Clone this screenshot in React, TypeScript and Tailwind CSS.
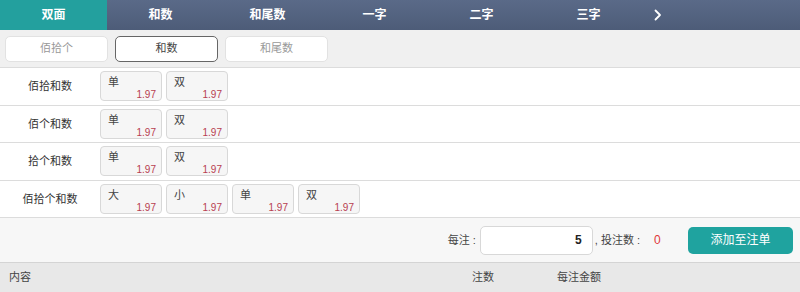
import React, { useState } from 'react'

const tabs = ['双面', '和数', '和尾数', '一字', '二字', '三字']
const subTabs = ['佰拾个', '和数', '和尾数']

const rows = [
  { label: '佰拾和数', items: ['单', '双'] },
  { label: '佰个和数', items: ['单', '双'] },
  { label: '拾个和数', items: ['单', '双'] },
  { label: '佰拾个和数', items: ['大', '小', '单', '双'] },
]

const App = () => {
  const [active, setActive] = useState(0)
  const [sub, setSub] = useState(1)
  const [amount, setAmount] = useState('5')

  return (
    <div className="w-[800px] h-[292px] overflow-hidden bg-white font-['Liberation_Sans','Noto_Sans_CJK_SC',sans-serif] text-[11px] text-[#333]">
      {/* top tabs */}
      <div className="flex h-[30px] bg-gradient-to-b from-[#5a6a88] to-[#4d5c78]">
        {tabs.map((t, i) => (
          <button
            key={t}
            onClick={() => setActive(i)}
            className={`w-[107px] h-full text-[12px] font-bold text-white ${active === i ? 'bg-[#23a09e]' : ''}`}
          >
            {t}
          </button>
        ))}
        <div className="w-[32px] flex items-center justify-center">
          <svg width="10" height="14" viewBox="0 0 10 14" fill="none">
            <path d="M2.5 2.5 L7 7 L2.5 11.5" stroke="white" strokeWidth="1.8" strokeLinecap="round" strokeLinejoin="round" />
          </svg>
        </div>
      </div>

      {/* sub tabs */}
      <div className="flex gap-[7px] h-[38px] items-center px-[5px] bg-[#f0f0f0] border-b border-[#dcdcdc]">
        {subTabs.map((t, i) => (
          <button
            key={t}
            onClick={() => setSub(i)}
            className={`w-[103px] h-[26px] rounded-[5px] bg-white text-[11px] ${sub === i ? 'border border-[#666] text-[#444]' : 'border border-[#e2e2e2] text-[#999]'}`}
          >
            {t}
          </button>
        ))}
      </div>

      {/* odds rows */}
      {rows.map((r) => (
        <div key={r.label} className="flex items-center h-[37.5px] border-b border-[#dcdcdc]">
          <div className="w-[100px] text-center text-[11px] text-[#333]">{r.label}</div>
          <div className="flex gap-[4px]">
            {r.items.map((it, idx) => (
              <div key={idx} className="w-[62px] h-[30px] rounded-[4px] border border-[#d8d8d8] bg-[#f6f6f6] flex flex-col justify-between pl-[7px] pr-[5px] pt-[3px] pb-[1px]">
                <span className="text-[11px] leading-[14px] text-[#444]">{it}</span>
                <span className="self-end text-[10px] leading-[12px] text-[#b84050]">1.97</span>
              </div>
            ))}
          </div>
        </div>
      ))}

      {/* bet bar */}
      <div className="flex items-center justify-end h-[45px] bg-[#f7f7f7] pr-[7px] border-b border-[#d4d4d4]">
        <span className="text-[11px] text-[#444]">每注 :</span>
        <input
          value={amount}
          onChange={(e) => setAmount(e.target.value)}
          className="ml-[4px] w-[113px] h-[29px] rounded-[5px] border border-[#d8d8d8] bg-white text-right pr-[10px] text-[12px] font-bold text-[#222] outline-none"
        />
        <span className="ml-[2px] text-[11px] text-[#444]">, 投注数 :</span>
        <span className="ml-[14px] w-[34px] text-[12px] text-[#e03838]">0</span>
        <button className="w-[105px] h-[27px] rounded-[5px] bg-[#1fa39f] text-white text-[12px]">添加至注单</button>
      </div>

      {/* list header */}
      <div className="flex items-center h-[29px] bg-[#e8e8e8] text-[11px] text-[#444]">
        <span className="pl-[9px] w-[472px]">内容</span>
        <span className="w-[85px]">注数</span>
        <span>每注金额</span>
      </div>
    </div>
  )
}

export default App
